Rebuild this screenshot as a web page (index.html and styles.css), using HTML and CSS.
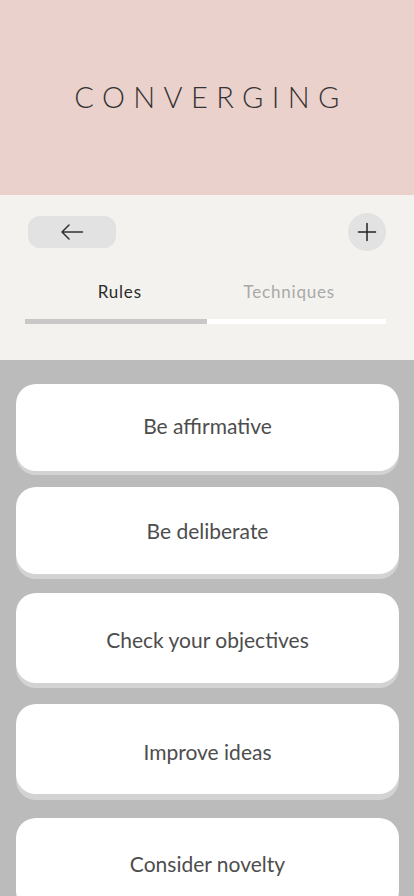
FILE: index.html
```html
<!DOCTYPE html>
<html>
<head>
<meta charset="utf-8">
<link rel="stylesheet" href="styles.css">
</head>
<body>
<header class="hero">
  <h1 class="title">CONVERGING</h1>
</header>
<section class="controls">
  <div class="toolbar">
    <button class="back" aria-label="Back">
      <svg width="24" height="16" viewBox="0 0 24 16"><path d="M22.5 8H2M9 1L2 8l7 7" fill="none" stroke="#333" stroke-width="1.5" stroke-linecap="round" stroke-linejoin="round"/></svg>
    </button>
    <button class="add" aria-label="Add">
      <svg width="20" height="20" viewBox="0 0 20 20"><path d="M10 1.5v17M1.5 10h17" fill="none" stroke="#222" stroke-width="1.5" stroke-linecap="round"/></svg>
    </button>
  </div>
  <nav class="tabs">
    <div class="tab active">Rules</div>
    <div class="tab">Techniques</div>
  </nav>
  <div class="tabbar">
    <div class="tabbar-fill"></div>
  </div>
</section>
<main class="list">
  <div class="card c1">Be affirmative</div>
  <div class="card c2">Be deliberate</div>
  <div class="card c3">Check your objectives</div>
  <div class="card c4">Improve ideas</div>
  <div class="card c5">Consider novelty</div>
</main>
</body>
</html>
```
FILE: styles.css
```css
* { box-sizing: border-box; }
html, body {
  margin: 0;
  padding: 0;
}
body {
  width: 414px;
  height: 896px;
  overflow: hidden;
  font-family: Lato, "Noto Sans", sans-serif;
  background: #bbbbbb;
  color: #444;
}
.hero {
  height: 195px;
  background: #ebd1cb;
  display: flex;
  align-items: center;
  justify-content: center;
}
.title {
  margin: 0 0 2px 8px;
  font-weight: 300;
  font-size: 29px;
  letter-spacing: 8.4px;
  color: #333;
  line-height: 1;
}
.controls {
  height: 165px;
  background: #f3f2ee;
  padding: 18px 28px 0 25px;
}
.toolbar {
  display: flex;
  justify-content: space-between;
  align-items: center;
  padding-left: 3px;
}
.back {
  width: 88px;
  height: 32px;
  border: none;
  border-radius: 12px;
  background: #e2e2e2;
  display: flex;
  align-items: center;
  justify-content: center;
  padding: 0;
}
.add {
  width: 38px;
  height: 38px;
  border: none;
  border-radius: 50%;
  background: #e2e2e2;
  display: flex;
  align-items: center;
  justify-content: center;
  padding: 0;
}
.tabs {
  display: flex;
  margin: 31px 0 0 10px;
  width: 339px;
}
.tab {
  flex: 1;
  text-align: center;
  font-size: 17px;
  letter-spacing: 0.8px;
  color: #a9a9a9;
  line-height: 20px;
}
.tab.active { color: #2a2a2a; }
.tabbar {
  margin-top: 17px;
  width: 361px;
  height: 5px;
  background: #ffffff;
}
.tabbar-fill {
  width: 182px;
  height: 5px;
  background: #c8c8c8;
}
.list {
  padding: 24px 15px 0 16px;
  display: flex;
  flex-direction: column;
}
.card {
  background: #fff;
  border-radius: 20px;
  height: 87px;
  display: flex;
  align-items: center;
  justify-content: center;
  padding-bottom: 5px;
  font-size: 21px;
  font-weight: 400;
  color: #4d4d4d;
  flex-shrink: 0;
  box-shadow: 0 4px 0 #d3d3d3;
}
.c2 { margin-top: 16px; padding-bottom: 1px; box-shadow: 0 5px 0 #d3d3d3; }
.c3 { margin-top: 19px; height: 90px; padding: 3px 0 0; box-shadow: 0 5px 0 #d3d3d3; }
.c4 { margin-top: 21px; height: 90px; padding: 5px 0 0; box-shadow: 0 6px 0 #d3d3d3; }
.c5 { margin-top: 24px; height: 92px; padding-bottom: 1px; }
```
